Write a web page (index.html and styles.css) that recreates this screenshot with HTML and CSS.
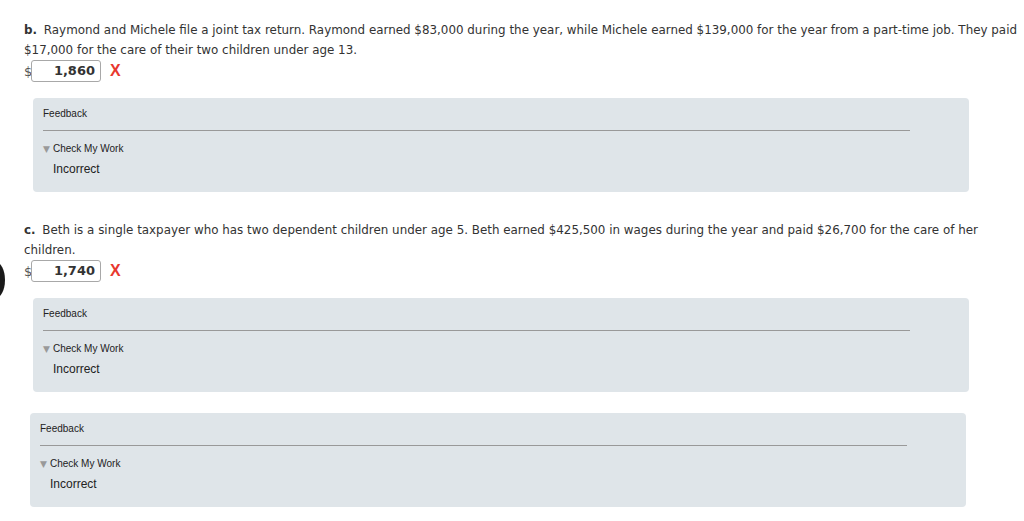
FILE: index.html
```html
<!DOCTYPE html>
<html>
<head>
<meta charset="utf-8">
<link rel="stylesheet" href="styles.css">
</head>
<body>
<div class="page">
  <div class="question">
    <p class="prompt"><b class="label">b.</b> Raymond and Michele file a joint tax return. Raymond earned $83,000 during the year, while Michele earned $139,000 for the year from a part-time job. They paid $17,000 for the care of their two children under age 13.</p>
    <div class="answer-row">
      <span class="dollar">$</span><span class="answer">1,860</span><span class="wrong">X</span>
    </div>
    <div class="feedback">
      <div class="fb-title">Feedback</div>
      <div class="fb-rule"></div>
      <div class="fb-check"><span class="tri">▼</span>Check My Work</div>
      <div class="fb-result">Incorrect</div>
    </div>
  </div>

  <div class="question">
    <p class="prompt"><b class="label">c.</b> Beth is a single taxpayer who has two dependent children under age 5. Beth earned $425,500 in wages during the year and paid $26,700 for the care of her children.</p>
    <div class="answer-row">
      <span class="dollar">$</span><span class="answer">1,740</span><span class="wrong">X</span>
    </div>
    <div class="feedback">
      <div class="fb-title">Feedback</div>
      <div class="fb-rule"></div>
      <div class="fb-check"><span class="tri">▼</span>Check My Work</div>
      <div class="fb-result">Incorrect</div>
    </div>
  </div>

  <div class="feedback feedback-outer">
    <div class="fb-title">Feedback</div>
    <div class="fb-rule"></div>
    <div class="fb-check"><span class="tri">▼</span>Check My Work</div>
    <div class="fb-result">Incorrect</div>
  </div>
</div>
<div class="edge-dot"></div>
</body>
</html>
```

FILE: styles.css
```css
html, body {
  margin: 0;
  padding: 0;
  background: #ffffff;
}

.page {
  display: flex;
  flex-direction: column;
  padding: 20px 0 0 24px;
  width: 1000px;
  color: #333333;
  font-family: "DejaVu Sans", Verdana, sans-serif;
}

.question + .question {
  margin-top: 28px;
}

.prompt {
  margin: 0;
  font-size: 11.9px;
  line-height: 20px;
  color: #333333;
}

.label {
  font-weight: bold;
  margin-right: 3px;
}

.answer-row {
  display: flex;
  align-items: center;
  height: 22px;
  margin-top: 0;
}

.dollar {
  font-size: 13px;
  color: #555555;
  width: 7px;
}

.answer {
  box-sizing: border-box;
  width: 70px;
  height: 22px;
  border: 1px solid #a8a8a8;
  border-radius: 3px;
  text-align: right;
  padding-right: 5px;
  font-weight: bold;
  font-size: 13px;
  line-height: 20px;
  color: #333333;
}

.wrong {
  margin-left: 9px;
  color: #e8382e;
  font-family: "Liberation Sans", Arial, sans-serif;
  font-weight: bold;
  font-size: 16px;
}

.feedback {
  box-sizing: border-box;
  margin: 16px 0 0 9px;
  width: 936px;
  height: 94px;
  background: #dfe5e9;
  border-radius: 4px;
  padding: 9px 59px 0 10px;
  font-family: "Liberation Sans", Arial, sans-serif;
  color: #222222;
}

.fb-title {
  font-size: 10px;
  line-height: 14px;
}

.fb-rule {
  height: 1px;
  background: #999999;
  margin-top: 9px;
}

.fb-check {
  margin-top: 11px;
  font-size: 10px;
  line-height: 14px;
  display: flex;
  align-items: center;
}

.tri {
  color: #999999;
  font-size: 9px;
  width: 10px;
  font-family: "DejaVu Sans", sans-serif;
}

.fb-result {
  margin-top: 5px;
  padding-left: 10px;
  font-size: 12px;
  line-height: 16px;
}

.feedback-outer {
  margin: 21px 0 0 6px;
}

.edge-dot {
  position: absolute;
  left: -14px;
  top: 262px;
  width: 19px;
  height: 36px;
  border-radius: 50%;
  background: #1a1a1a;
}
```
